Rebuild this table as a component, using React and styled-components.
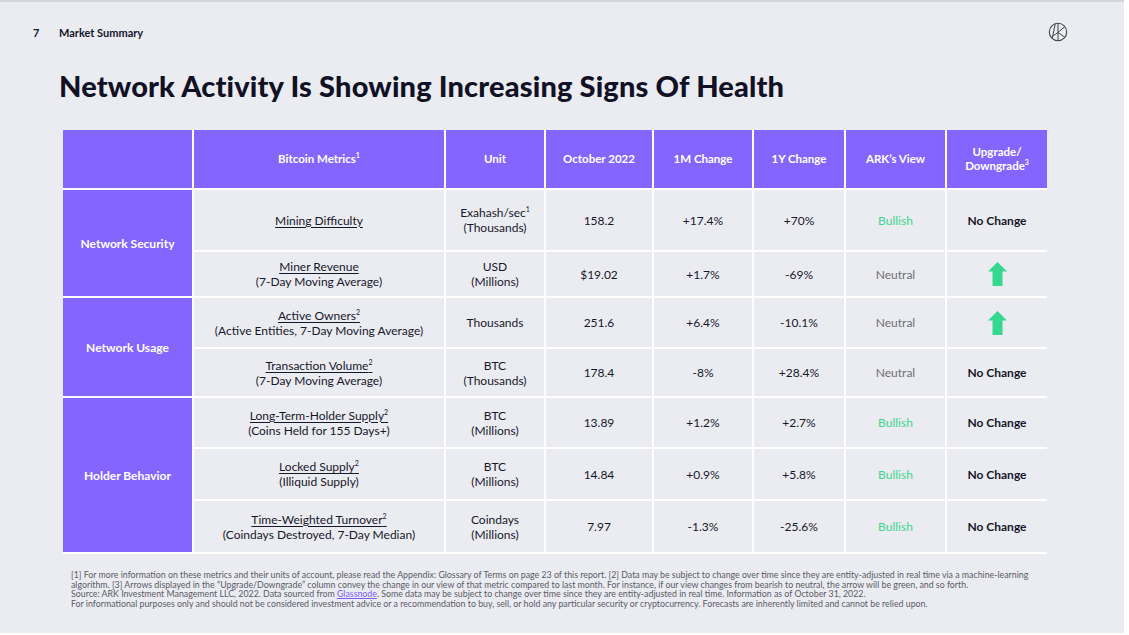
import React from "react";
import styled, { createGlobalStyle } from "styled-components";

const Global = createGlobalStyle`
  html, body { margin: 0; padding: 0; background: #ffffff; }
  body { font-family: "Lato", "Noto Sans", sans-serif; }
  * { box-sizing: border-box; }
`;

const Slide = styled.div`
  width: 1124px;
  height: 633px;
  background: #ebecf2;
  border-top: 2px solid #d5d6dc;
  display: flex;
  flex-direction: column;
  color: #15152b;
`;

const TopBar = styled.div`
  display: flex;
  align-items: center;
  height: 20px;
  margin-top: 20px;
  padding: 0 56px 0 33px;
`;

const PageNum = styled.span`
  width: 26px;
  font-size: 11px;
  font-weight: 700;
`;

const Section = styled.span`
  font-size: 11px;
  font-weight: 700;
  flex: 1;
`;

const Title = styled.h1`
  margin: 27px 0 0 59px;
  font-size: 29px;
  line-height: 34px;
  font-weight: 900;
  color: #111126;
  letter-spacing: 0.15px;
`;

const Table = styled.table`
  margin: 27px 0 0 63px;
  width: 984px;
  border-collapse: collapse;
  table-layout: fixed;
`;

const Th = styled.th`
  background: #8466ff;
  color: #ffffff;
  font-size: 11.5px;
  font-weight: 700;
  line-height: 14px;
  border: 2px solid #ffffff;
  border-top: none;
  height: 59px;
  text-align: center;
  padding: 0 4px;
  &:first-child { border-left: none; }
  &:last-child { border-right: none; }
`;

const Group = styled.td`
  background: #8466ff;
  color: #ffffff;
  font-size: 12px;
  font-weight: 700;
  text-align: center;
  border: 2px solid #ffffff;
  border-left: none;
  padding: 0 4px;
`;

const Td = styled.td`
  border: 2px solid #ffffff;
  text-align: center;
  font-size: 12px;
  line-height: 15px;
  color: #17172a;
  height: ${(p) => p.$h}px;
  padding: 0 4px;
  font-weight: ${(p) => (p.$strong ? 700 : 400)};
  &:last-child { border-right: none; }
`;

const MetricName = styled.span`
  text-decoration: underline;
  text-underline-offset: 2px;
  text-decoration-thickness: 1px;
`;

const Sup = styled.sup`
  font-size: 7px;
  line-height: 0;
  vertical-align: 5px;
`;

const View = styled.span`
  color: ${(p) => (p.$kind === "Bullish" ? "#3fd68e" : "#6f6f72")};
`;

const Footnote = styled.div`
  margin: 16px 0 0 71px;
  font-size: 8.8px;
  line-height: 9.6px;
  color: #5a5a66;
  white-space: nowrap;
`;

const Link = styled.span`
  color: #7b5cff;
  text-decoration: underline;
`;

const ArrowBox = styled.svg`
  display: block;
  margin: 0 auto;
`;

const Logo = () => (
  <svg width="20" height="20" viewBox="0 0 20 20">
    <circle cx="10" cy="10" r="8.7" fill="none" stroke="#444" strokeWidth="1.1" />
    <line x1="7.3" y1="1.6" x2="4.3" y2="16" stroke="#444" strokeWidth="1" />
    <line x1="10" y1="1.3" x2="10" y2="18.7" stroke="#444" strokeWidth="1" />
    <line x1="10" y1="10.5" x2="16.2" y2="5" stroke="#444" strokeWidth="1" />
    <line x1="10" y1="10.5" x2="16.5" y2="15" stroke="#444" strokeWidth="1" />
    <line x1="4.6" y1="14.2" x2="10" y2="10.5" stroke="#444" strokeWidth="1" />
  </svg>
);

const UpArrow = () => (
  <ArrowBox width="19" height="24" viewBox="0 0 19 24">
    <polygon points="9.5,0 19,9.5 14.5,9.5 14.5,24 4.5,24 4.5,9.5 0,9.5" fill="#36d88f" />
  </ArrowBox>
);

const rows = [
  { group: "Network Security", span: 2, h: 62, name: "Mining Difficulty", sup: "", sub: "", unit: ["Exahash/sec", "(Thousands)"], unitSup: true, oct: "158.2", m: "+17.4%", y: "+70%", view: "Bullish", up: false },
  { h: 46, name: "Miner Revenue", sup: "", sub: "(7-Day Moving Average)", unit: ["USD", "(Millions)"], oct: "$19.02", m: "+1.7%", y: "-69%", view: "Neutral", up: true },
  { group: "Network Usage", span: 2, h: 51, name: "Active Owners", sup: "2", sub: "(Active Entities, 7-Day Moving Average)", unit: ["Thousands"], oct: "251.6", m: "+6.4%", y: "-10.1%", view: "Neutral", up: true },
  { h: 49, name: "Transaction Volume", sup: "2", sub: "(7-Day Moving Average)", unit: ["BTC", "(Thousands)"], oct: "178.4", m: "-8%", y: "+28.4%", view: "Neutral", up: false },
  { group: "Holder Behavior", span: 3, h: 51, name: "Long-Term-Holder Supply", sup: "2", sub: "(Coins Held for 155 Days+)", unit: ["BTC", "(Millions)"], oct: "13.89", m: "+1.2%", y: "+2.7%", view: "Bullish", up: false },
  { h: 52, name: "Locked Supply", sup: "2", sub: "(Illiquid Supply)", unit: ["BTC", "(Millions)"], oct: "14.84", m: "+0.9%", y: "+5.8%", view: "Bullish", up: false },
  { h: 53, name: "Time-Weighted Turnover", sup: "2", sub: "(Coindays Destroyed, 7-Day Median)", unit: ["Coindays", "(Millions)"], oct: "7.97", m: "-1.3%", y: "-25.6%", view: "Bullish", up: false },
];

const widths = [130, 252, 100, 108, 100, 92, 101, 101];

export default function App() {
  return (
    <>
      <Global />
      <Slide>
        <TopBar>
          <PageNum>7</PageNum>
          <Section>Market Summary</Section>
          <Logo />
        </TopBar>
        <Title>Network Activity Is Showing Increasing Signs Of Health</Title>
        <Table>
          <colgroup>
            {widths.map((w, i) => (
              <col key={i} width={w} />
            ))}
          </colgroup>
          <thead>
            <tr>
              <Th></Th>
              <Th>Bitcoin Metrics<Sup>1</Sup></Th>
              <Th>Unit</Th>
              <Th>October 2022</Th>
              <Th>1M Change</Th>
              <Th>1Y Change</Th>
              <Th>ARK’s View</Th>
              <Th>Upgrade/<br />Downgrade<Sup>3</Sup></Th>
            </tr>
          </thead>
          <tbody>
            {rows.map((r, i) => (
              <tr key={i}>
                {r.group && <Group rowSpan={r.span}>{r.group}</Group>}
                <Td $h={r.h}>
                  <MetricName>{r.name}{r.sup && <Sup>{r.sup}</Sup>}</MetricName>
                  {r.sub && <><br />{r.sub}</>}
                </Td>
                <Td>
                  {r.unit[0]}{r.unitSup && <Sup>1</Sup>}
                  {r.unit[1] && <><br />{r.unit[1]}</>}
                </Td>
                <Td>{r.oct}</Td>
                <Td>{r.m}</Td>
                <Td>{r.y}</Td>
                <Td><View $kind={r.view}>{r.view}</View></Td>
                <Td $strong>{r.up ? <UpArrow /> : "No Change"}</Td>
              </tr>
            ))}
          </tbody>
        </Table>
        <Footnote>
          [1] For more information on these metrics and their units of account, please read the Appendix: Glossary of Terms on page 23 of this report. [2] Data may be subject to change over time since they are entity-adjusted in real time via a machine-learning<br />
          algorithm. [3] Arrows displayed in the “Upgrade/Downgrade” column convey the change in our view of that metric compared to last month. For instance, if our view changes from bearish to neutral, the arrow will be green, and so forth.<br />
          Source: ARK Investment Management LLC, 2022. Data sourced from <Link>Glassnode</Link>. Some data may be subject to change over time since they are entity-adjusted in real time. Information as of October 31, 2022.<br />
          For informational purposes only and should not be considered investment advice or a recommendation to buy, sell, or hold any particular security or cryptocurrency. Forecasts are inherently limited and cannot be relied upon.
        </Footnote>
      </Slide>
    </>
  );
}
